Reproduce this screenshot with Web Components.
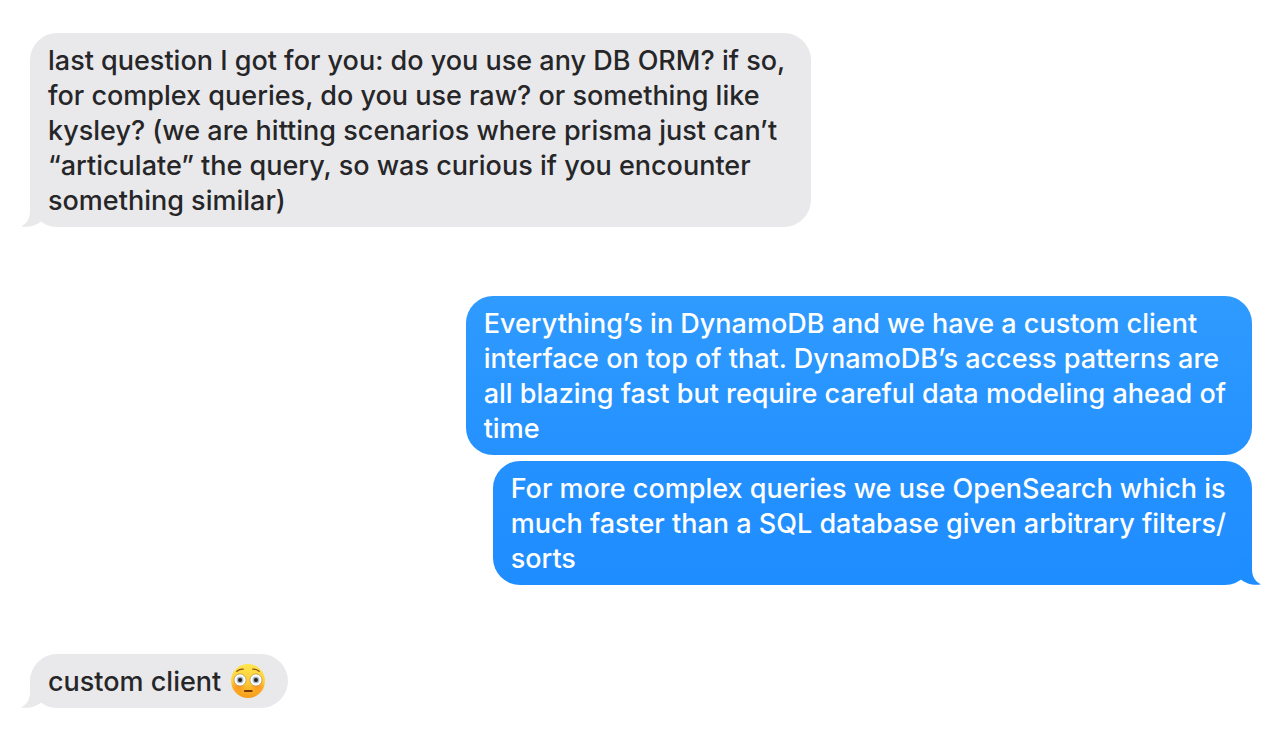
<!DOCTYPE html>
<html lang="en">
<head>
<meta charset="utf-8">
<meta name="viewport" content="width=device-width, initial-scale=1">
<title>Conversation</title>
<style>
  html, body { margin: 0; background: #fff; }
  body { font-family: Inter, "Liberation Sans", sans-serif; font-weight: 500; }
</style>
</head>
<body>
<message-thread>
  <message-group side="received">
    <message-bubble side="received" tail>last question I got for you: do you use any DB ORM? if so,<br>for complex queries, do you use raw? or something like<br>kysley? (we are hitting scenarios where prisma just can’t<br>“articulate” the query, so was curious if you encounter<br>something similar)</message-bubble>
  </message-group>
  <message-group side="sent">
    <message-bubble side="sent" class="first">Everything’s in DynamoDB and we have a custom client<br>interface on top of that. DynamoDB’s access patterns are<br>all blazing fast but require careful data modeling ahead of<br>time</message-bubble>
    <message-bubble side="sent" tail>For more complex queries we use OpenSearch which is<br>much faster than a SQL database given arbitrary filters/<br>sorts</message-bubble>
  </message-group>
  <message-group side="received">
    <message-bubble side="received" tail>custom client <flushed-face></flushed-face></message-bubble>
  </message-group>
</message-thread>
<script>
  class MessageThread extends HTMLElement {
    constructor() {
      super();
      this.attachShadow({ mode: 'open' }).innerHTML = `
        <style>
          :host { display: block; }
          main { display: flex; flex-direction: column; gap: 69px; padding: 33px 26px 31px 30px; }
        </style>
        <main><slot></slot></main>`;
    }
  }

  class MessageGroup extends HTMLElement {
    constructor() {
      super();
      this.attachShadow({ mode: 'open' }).innerHTML = `
        <style>
          :host { display: flex; flex-direction: column; align-items: flex-start; gap: 6px; }
          :host([side="sent"]) { align-items: flex-end; }
        </style>
        <slot></slot>`;
    }
  }

  class MessageBubble extends HTMLElement {
    constructor() {
      super();
      this.attachShadow({ mode: 'open' }).innerHTML = `
        <style>
          :host {
            display: block; position: relative; box-sizing: border-box; max-width: 100%;
            padding: 10px 26px 9px 18px; border-radius: 27px;
            font-size: 27px; line-height: 35px;
            color: #262628; background: #e9e9eb;
          }
          :host([side="sent"]) { color: #fff; background: linear-gradient(#2491ff, #1e8dff); }
          :host(.first) { background: linear-gradient(#2f9bff, #2491ff); }
          svg { display: none; position: absolute; left: -9px; bottom: 0; width: 20px; height: 26px; fill: #e9e9eb; }
          :host([tail]) svg { display: block; }
          :host([side="sent"]) svg { left: auto; right: -9px; transform: scaleX(-1); fill: #1e8dff; }
        </style>
        <slot></slot>
        <svg viewBox="0 0 20 26" aria-hidden="true"><path d="M9 0V10C9 18 5.500 23 0 25.200C7 27 15 24.500 20 20.400V0Z"/></svg>`;
    }
  }

  class FlushedFace extends HTMLElement {
    constructor() {
      super();
      this.attachShadow({ mode: 'open' }).innerHTML = `
        <style>
          :host { display: inline-flex; height: 28px; align-items: center; vertical-align: middle; }
          svg { flex: none; width: 36px; height: 36px; margin: 0 -4px 5px 2px; }
        </style>
        <svg viewBox="0 0 34 34" role="img" aria-label="😳">
          <defs>
            <linearGradient id="skin" x1="0" y1="0" x2="0" y2="1">
              <stop offset="0" stop-color="#ffe64f"/><stop offset=".5" stop-color="#ffcf35"/><stop offset="1" stop-color="#f59a1b"/>
            </linearGradient>
            <radialGradient id="blush">
              <stop offset="0" stop-color="#ff7618" stop-opacity=".6"/><stop offset="1" stop-color="#ff7618" stop-opacity="0"/>
            </radialGradient>
          </defs>
          <circle cx="17" cy="17" r="16" fill="url(#skin)"/>
          <circle cx="8" cy="22" r="7" fill="url(#blush)"/>
          <circle cx="26" cy="22" r="7" fill="url(#blush)"/>
          <g fill="none" stroke="#8a5312" stroke-width="1.300" stroke-linecap="round">
            <path d="M6.500 7.800Q9 5.600 12.500 5.800M21.500 5.800Q25 5.600 27.500 7.800"/>
          </g>
          <g fill="#fff" stroke="#b99058" stroke-width=".7">
            <circle cx="9.500" cy="16" r="5.700"/><circle cx="24.500" cy="16" r="5.700"/>
          </g>
          <g fill="#a5bac6"><circle cx="9.500" cy="16" r="3.200"/><circle cx="24.500" cy="16" r="3.200"/></g>
          <g fill="#28221f"><circle cx="9.500" cy="16" r="1.900"/><circle cx="24.500" cy="16" r="1.900"/></g>
          <path d="M14 26.500H20.500" stroke="#75390b" stroke-width="1.800" stroke-linecap="round"/>
        </svg>`;
    }
  }

  customElements.define('message-thread', MessageThread);
  customElements.define('message-group', MessageGroup);
  customElements.define('message-bubble', MessageBubble);
  customElements.define('flushed-face', FlushedFace);
</script>
</body>
</html>
